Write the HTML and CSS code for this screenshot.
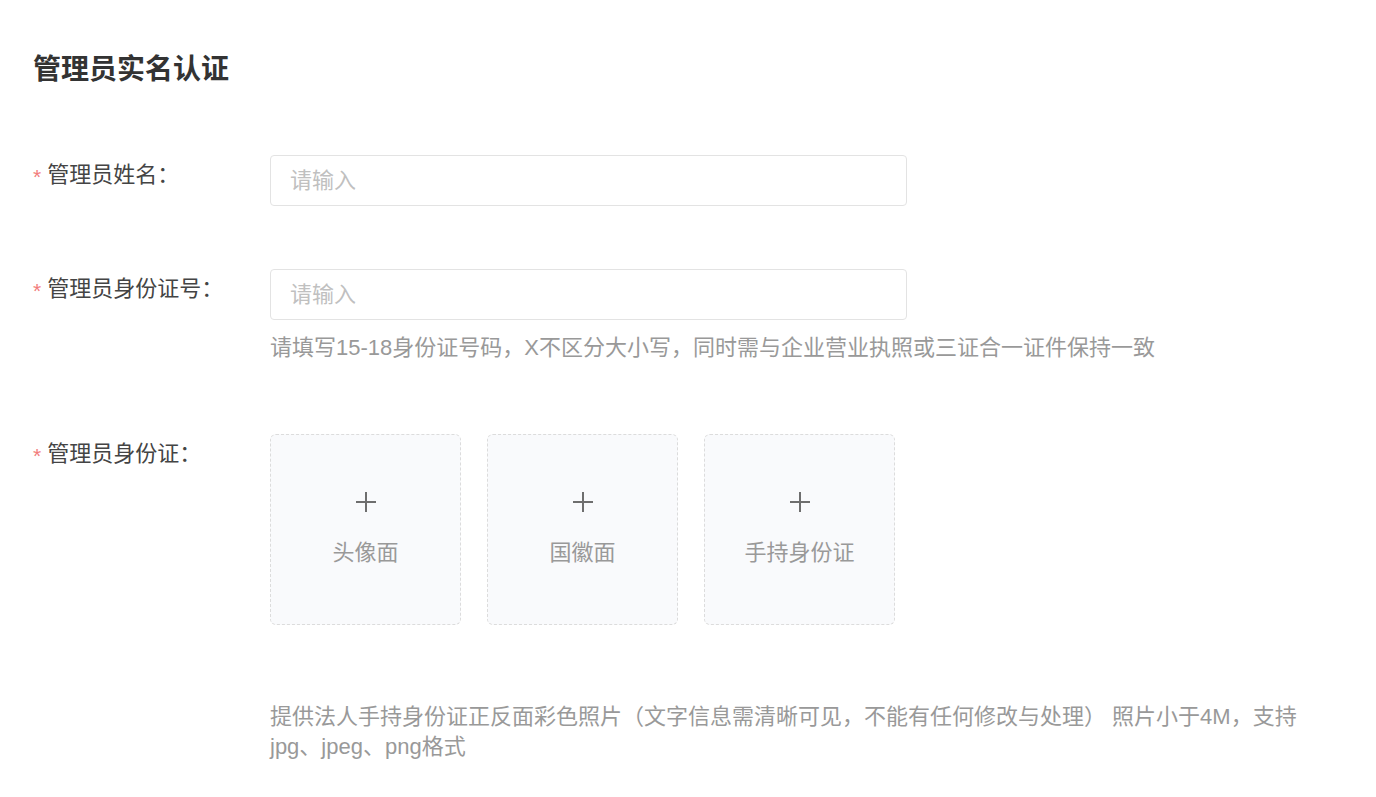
FILE: index.html
```html
<!DOCTYPE html>
<html lang="zh-CN">
<head>
    <meta charset="UTF-8">
    <meta name="viewport" content="width=device-width, initial-scale=1.0">
    <title>管理员实名认证</title>
    <link rel="stylesheet" href="styles.css">
</head>
<body>

    <div class="page">
        <h1 class="title">管理员实名认证</h1>

        <div class="form">
            <div class="form-row">
                <label class="form-label"><span class="required">*</span>管理员姓名：</label>
                <div class="form-field">
                    <input class="input" type="text" placeholder="请输入">
                </div>
            </div>

            <div class="form-row row-id">
                <label class="form-label"><span class="required">*</span>管理员身份证号：</label>
                <div class="form-field">
                    <input class="input" type="text" placeholder="请输入">
                    <p class="hint">请填写15-18身份证号码，X不区分大小写，同时需与企业营业执照或三证合一证件保持一致</p>
                </div>
            </div>

            <div class="form-row row-upload">
                <label class="form-label"><span class="required">*</span>管理员身份证：</label>
                <div class="form-field">
                    <div class="uploads">
                        <div class="upload">
                            <svg class="plus" width="22" height="22" viewBox="0 0 22 22"><path d="M11 1v20M1 11h20" stroke="#6e6e6e" stroke-width="2" fill="none"/></svg>
                            <span>头像面</span>
                        </div>
                        <div class="upload">
                            <svg class="plus" width="22" height="22" viewBox="0 0 22 22"><path d="M11 1v20M1 11h20" stroke="#6e6e6e" stroke-width="2" fill="none"/></svg>
                            <span>国徽面</span>
                        </div>
                        <div class="upload">
                            <svg class="plus" width="22" height="22" viewBox="0 0 22 22"><path d="M11 1v20M1 11h20" stroke="#6e6e6e" stroke-width="2" fill="none"/></svg>
                            <span>手持身份证</span>
                        </div>
                    </div>
                    <p class="note">提供法人手持身份证正反面彩色照片（文字信息需清晰可见，不能有任何修改与处理） 照片小于4M，支持 jpg、jpeg、png格式</p>
                </div>
            </div>
        </div>
    </div>

</body>
</html>
```

FILE: styles.css
```css
body {
    margin: 0;
    padding: 0;
    background-color: #fff;
    font-family: "Liberation Sans", "Noto Sans CJK SC", sans-serif;
    color: #333;
}
.page {
    padding: 55px 33px 0 33px;
}
.title {
    margin: 0;
    font-size: 28px;
    line-height: 30px;
    font-weight: bold;
    color: #333;
}
.form {
    margin-top: 70px;
}
.form-row {
    display: flex;
}
.row-id {
    margin-top: 63px;
}
.row-upload {
    margin-top: 71px;
}
.form-label {
    width: 237px;
    flex-shrink: 0;
    font-size: 22px;
    line-height: 40px;
    color: #444;
}
.required {
    color: #f27c7c;
    font-size: 21px;
    margin-right: 6px;
    vertical-align: -2px;
}
.form-field {
    flex: 1;
}
.input {
    display: block;
    box-sizing: border-box;
    width: 637px;
    height: 51px;
    padding: 0 19px;
    border: 1px solid #e3e3e3;
    border-radius: 4px;
    font-family: inherit;
    font-size: 22px;
    color: #333;
    outline: none;
}
.input::placeholder {
    color: #c0c0c0;
}
.hint {
    margin: 13px 0 0 0;
    font-size: 22px;
    line-height: 30px;
    color: #999;
}
.uploads {
    display: flex;
    gap: 26px;
}
.upload {
    box-sizing: border-box;
    width: 191px;
    height: 191px;
    border: 1px dashed #dcdcdc;
    border-radius: 6px;
    background-color: #f9fafc;
    display: flex;
    flex-direction: column;
    align-items: center;
    justify-content: center;
    gap: 25px;
}
.upload span {
    font-size: 22px;
    line-height: 30px;
    color: #999;
}
.note {
    margin: 77px 0 0 0;
    max-width: 1050px;
    font-size: 22px;
    line-height: 30px;
    color: #999;
}
```
